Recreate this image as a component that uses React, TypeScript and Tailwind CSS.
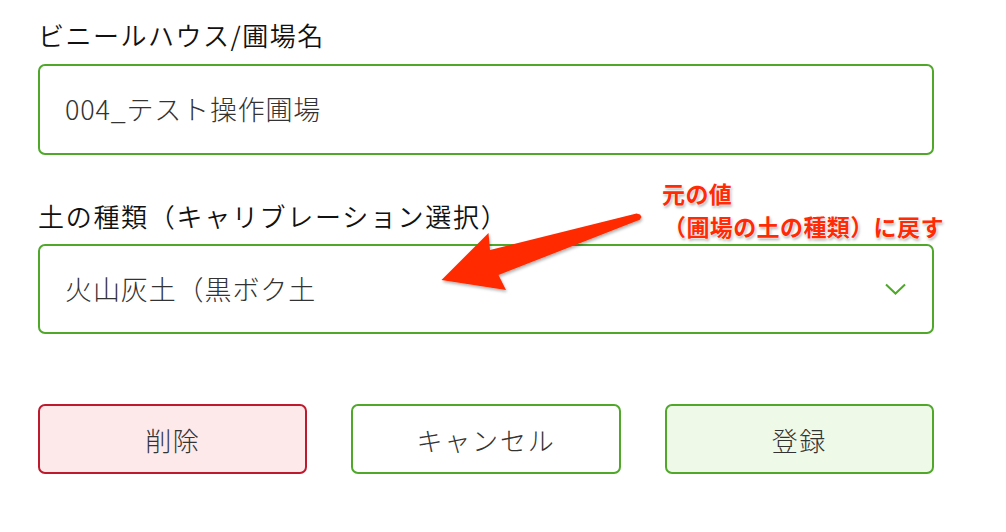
const font = { fontFamily: '"Noto Sans CJK JP", "Noto Sans", sans-serif' }

function Chevron() {
  return (
    <svg width="21" height="12" viewBox="0 0 21 12" fill="none" className="shrink-0">
      <polyline points="1,1.5 10.5,10.5 20,1.5" stroke="#4fa82a" strokeWidth="2" />
    </svg>
  )
}

export default function App() {
  return (
    <div className="relative h-[532px] w-[1006px] overflow-hidden bg-white" style={font}>
      <div className="ml-[38px] flex w-[896px] flex-col pt-[17px]">
        <label className="mb-[11px] text-[26px] font-[350] leading-[36px] tracking-[1.5px] text-[#111111]">
          ビニールハウス/圃場名
        </label>
        <div className="flex h-[91px] items-center rounded-[7px] border-2 border-[#4fa82a] px-[25px] text-[27px] font-light tracking-[0.8px] text-[#333333]">
          004_テスト操作圃場
        </div>

        <label className="mt-[43px] mb-[10px] text-[26px] font-[350] leading-[36px] tracking-[1.7px] text-[#111111]">
          土の種類（キャリブレーション選択）
        </label>
        <div className="flex h-[90px] items-center justify-between rounded-[7px] border-2 border-[#4fa82a] pl-[25px] pr-[26px] text-[27px] font-light tracking-[0.9px] text-[#333333]">
          <span>火山灰土（黒ボク土</span>
          <Chevron />
        </div>

        <div className="mt-[70px] grid grid-cols-3 gap-x-[44px]">
          <button type="button" className="flex h-[70px] items-center justify-center rounded-[7px] border-2 border-[#be1a2e] bg-[#fde8ea] text-[26px] font-light tracking-[1.5px] text-[#333333]">
            削除
          </button>
          <button type="button" className="flex h-[70px] items-center justify-center rounded-[7px] border-2 border-[#4fa82a] bg-white text-[26px] font-light tracking-[1.8px] text-[#333333]">
            キャンセル
          </button>
          <button type="button" className="flex h-[70px] items-center justify-center rounded-[7px] border-2 border-[#4fa82a] bg-[#eef9e8] text-[26px] font-light tracking-[1.5px] text-[#333333]">
            登録
          </button>
        </div>
      </div>

      {/* annotation overlay */}
      <svg className="pointer-events-none absolute left-0 top-0" width="1006" height="532">
        <defs>
          <filter id="sh" x="-10%" y="-10%" width="130%" height="140%">
            <feDropShadow dx="1" dy="2" stdDeviation="1.5" floodColor="#000" floodOpacity="0.3" />
          </filter>
        </defs>
        <polygon
          points="441.5,280 488.5,233 490,250 636.5,213.5 640,214.5 641.5,217 639.5,220 636.5,221 498.5,275 506,290"
          fill="#ff2a06"
          filter="url(#sh)"
        />
      </svg>
      <div className="pointer-events-none absolute left-[662px] top-[177px] flex flex-col text-[23px] font-bold leading-[33px] tracking-[0.4px] text-[#ff2a06] [text-shadow:0_0_2px_#fff,0_0_2px_#fff,1px_2px_3px_rgba(0,0,0,0.35)]">
        <span>元の値</span>
        <span className="pl-px">（圃場の土の種類）に戻す</span>
      </div>
    </div>
  )
}
